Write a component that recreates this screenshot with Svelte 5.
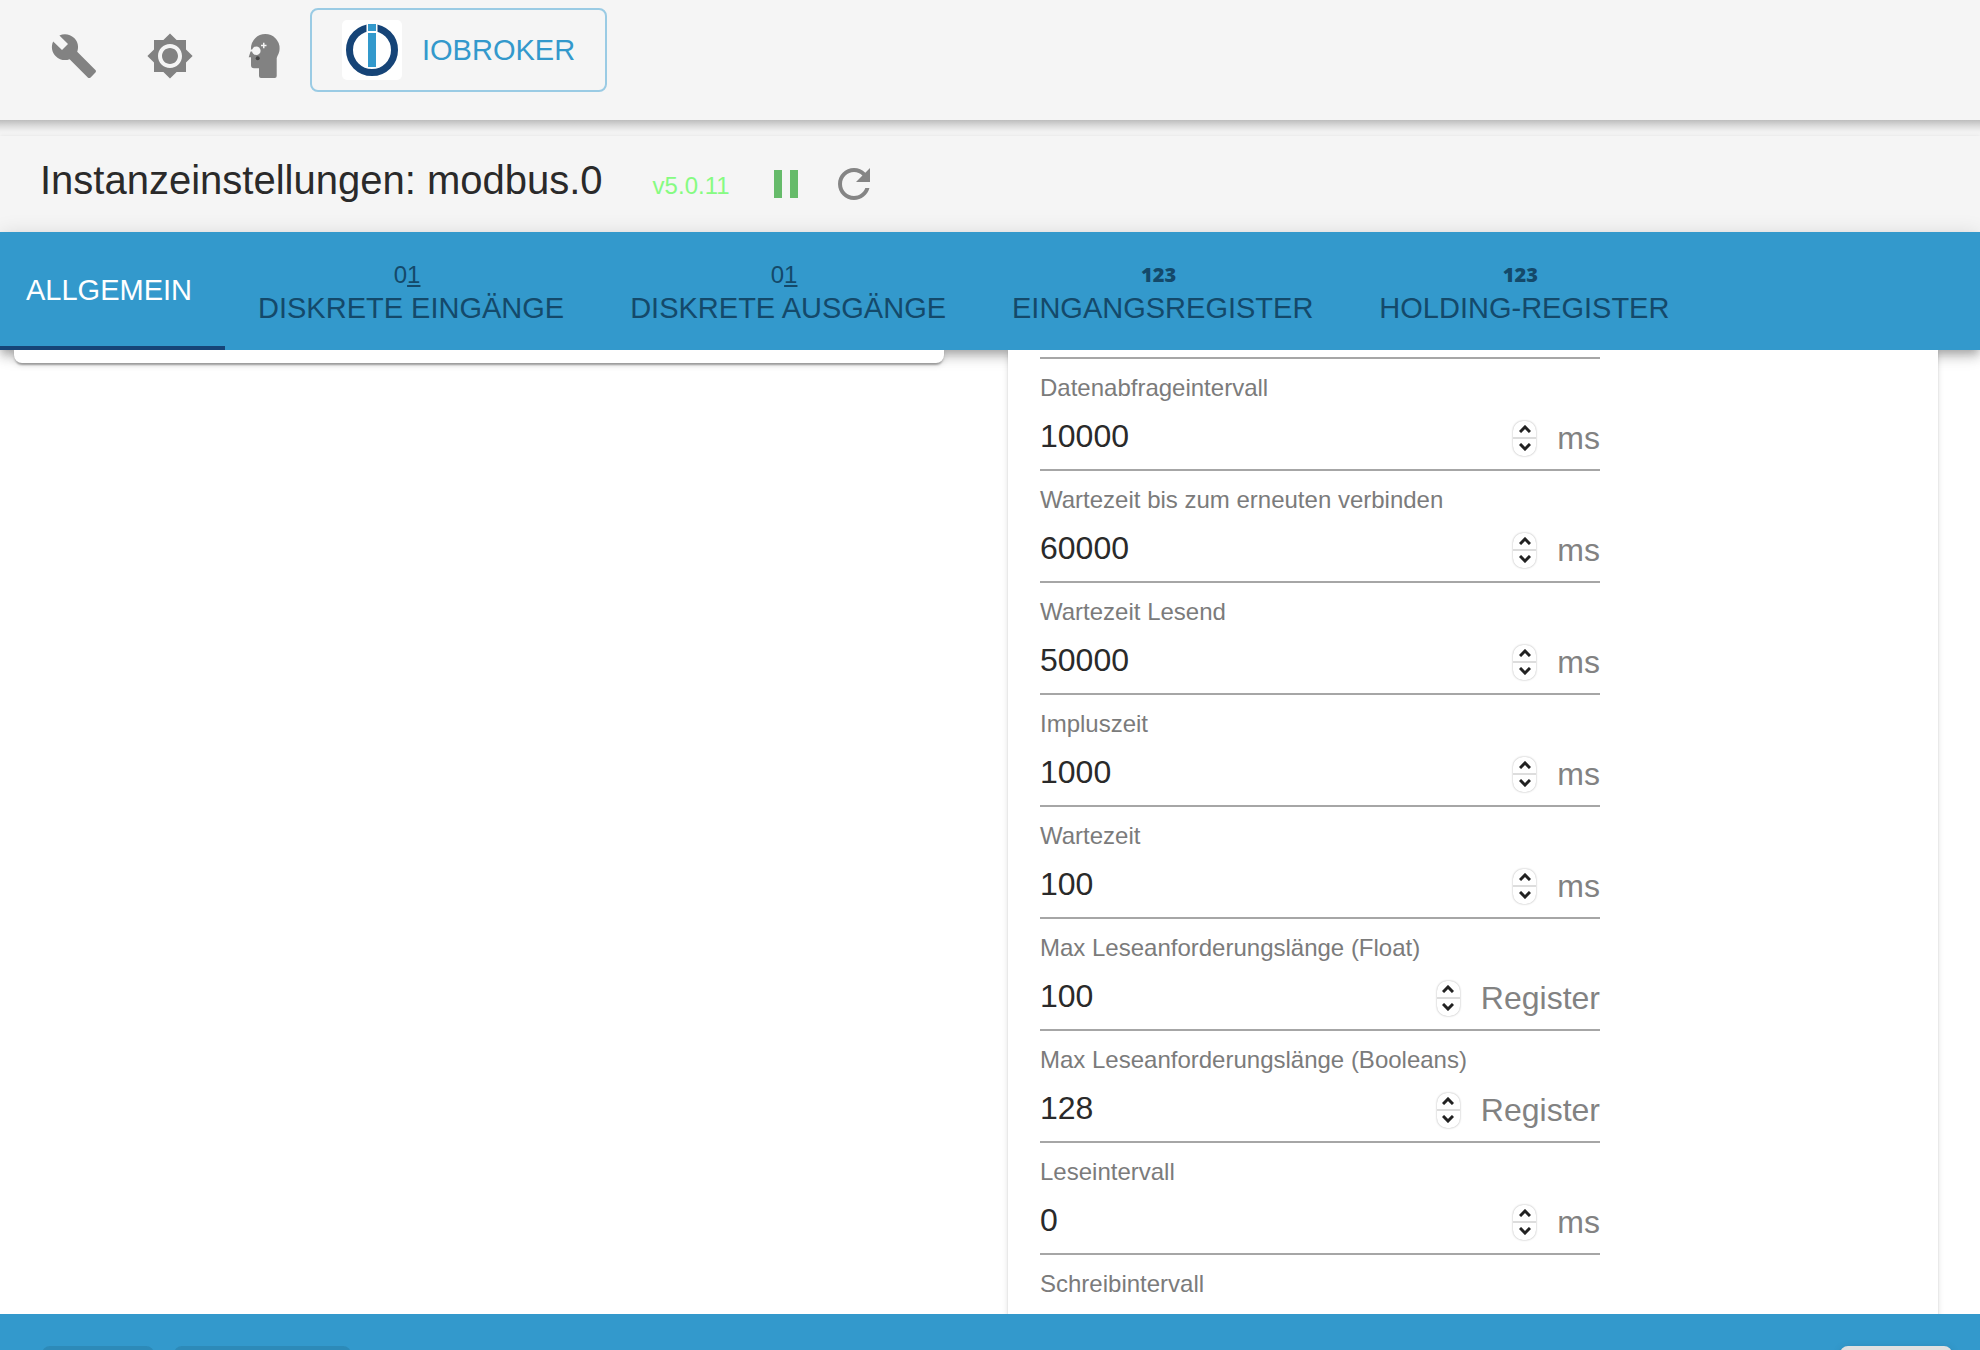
<script>
  let tabs = $state([
    { label: 'Allgemein', icon: '' },
    { label: 'Diskrete Eingänge', icon: 'binary' },
    { label: 'Diskrete Ausgänge', icon: 'binary' },
    { label: 'Eingangsregister', icon: 'number' },
    { label: 'Holding-Register', icon: 'number' },
  ]);
  let activeTab = $state(0);

  let fields = $state([
    { id: 'poll', label: 'Datenabfrageintervall', value: 10000, unit: 'ms' },
    { id: 'recon', label: 'Wartezeit bis zum erneuten verbinden', value: 60000, unit: 'ms' },
    { id: 'timeout', label: 'Wartezeit Lesend', value: 50000, unit: 'ms' },
    { id: 'pulsetime', label: 'Impluszeit', value: 1000, unit: 'ms' },
    { id: 'waitTime', label: 'Wartezeit', value: 100, unit: 'ms' },
    { id: 'maxBlock', label: 'Max Leseanforderungslänge (Float)', value: 100, unit: 'Register' },
    { id: 'maxBoolBlock', label: 'Max Leseanforderungslänge (Booleans)', value: 128, unit: 'Register' },
    { id: 'readInterval', label: 'Leseintervall', value: 0, unit: 'ms' },
    { id: 'writeInterval', label: 'Schreibintervall', value: null, unit: '' },
  ]);

  function step(field, delta) {
    field.value = Math.max(0, Number(field.value) + delta);
  }
</script>

<div class="app">
  <header class="topbar">
    <div class="tools">
      <button class="icon-button" aria-label="Einstellungen">
        <svg viewBox="0 0 24 24"><path d="M22.7 19l-9.1-9.1c.9-2.3.4-5-1.5-6.9-2-2-5-2.4-7.4-1.3L9 6 6 9 1.6 4.7C.4 7.1.9 10.1 2.9 12.1c1.9 1.9 4.6 2.4 6.9 1.5l9.1 9.1c.4.4 1 .4 1.4 0l2.3-2.3c.5-.4.5-1.1.1-1.4z" /></svg>
      </button>
      <button class="icon-button" aria-label="Farbschema">
        <svg viewBox="0 0 24 24"><path d="M20 8.69V4h-4.69L12 .69 8.69 4H4v4.69L.69 12 4 15.31V20h4.69L12 23.31 15.31 20H20v-4.69L23.31 12 20 8.69zM12 18c-3.31 0-6-2.69-6-6s2.69-6 6-6 6 2.69 6 6-2.69 6-6 6zm0-10c-2.21 0-4 1.79-4 4s1.79 4 4 4 4-1.79 4-4-1.79-4-4-4z" /></svg>
      </button>
      <button class="icon-button" aria-label="Expertenmodus">
        <svg viewBox="0 0 48 48">
          <path d="M9 16.300a14.300 14.300 0 0 1 28.600 0c0 4.500-1.500 6.200-2.900 9.700v18a2 2 0 0 1-2 2H19a2 2 0 0 1-2-2v-7.700h-5a3 3 0 0 1-3-3v-8H6.700L8.700 19z" />
          <path class="cut" d="M7 17.500h5v2H7zM21 10.700h1.500v2h2v1.500h-2v2H21v-2h-2v-1.500h2z" />
          <circle class="cut" cx="14.300" cy="18.700" r="4.300" />
          <circle class="dot" cx="15.700" cy="26.300" r="2" />
        </svg>
      </button>
    </div>
    <button class="host">
      <svg class="logo" viewBox="0 0 60 60">
        <rect width="60" height="60" rx="5" fill="#fff" />
        <circle cx="30" cy="30" r="22.500" fill="none" stroke="#164477" stroke-width="7" />
        <rect x="24.500" y="2" width="11" height="12" fill="#fff" />
        <rect x="26" y="4" width="8" height="7" fill="#3399cc" />
        <rect x="26" y="13" width="8" height="34" fill="#3399cc" />
      </svg>
      <span>IOBROKER</span>
    </button>
  </header>

  <div class="titlebar">
    <div class="heading">
      <h1>Instanzeinstellungen: modbus.0</h1>
      <span class="version">v5.0.11</span>
    </div>
    <button class="small-button pause" aria-label="Instanz anhalten">
      <svg viewBox="0 0 24 24"><path d="M6 19h4V5H6v14zm8-14v14h4V5h-4z" /></svg>
    </button>
    <button class="small-button" aria-label="Instanz neu starten">
      <svg viewBox="0 0 24 24"><path d="M17.650 6.350C16.200 4.900 14.210 4 12 4c-4.420 0-7.990 3.580-7.990 8s3.570 8 7.990 8c3.730 0 6.840-2.550 7.730-6h-2.080c-.82 2.330-3.040 4-5.650 4-3.310 0-6-2.690-6-6s2.690-6 6-6c1.660 0 3.140.69 4.220 1.780L13 11h7V4l-2.350 2.350z" /></svg>
    </button>
  </div>

  <nav class="tabs">
    {#each tabs as tab, i}
      <button class="tab" class:active={activeTab === i} onclick={() => (activeTab = i)}>
        {#if tab.icon === 'binary'}
          <span class="binary">0<u>1</u></span>
        {:else if tab.icon === 'number'}
          <span class="number">123</span>
        {/if}
        <span class="tab-label">{tab.label}</span>
      </button>
    {/each}
  </nav>

  <main>
    <section class="card connection"></section>
    <section class="card general">
      <div class="rule"></div>
      {#each fields as field}
        <div class="field">
          <label for={field.id}>{field.label}</label>
          <div class="row">
            <input id={field.id} type="number" bind:value={field.value} />
            <div class="spinner">
              <button aria-label="Erhöhen" onclick={() => step(field, 1)}>
                <svg viewBox="0 0 12 8"><path d="M1 7l5-5 5 5" /></svg>
              </button>
              <button aria-label="Verringern" onclick={() => step(field, -1)}>
                <svg viewBox="0 0 12 8"><path d="M1 1l5 5 5-5" /></svg>
              </button>
            </div>
            {#if field.unit}
              <span class="unit">{field.unit}</span>
            {/if}
          </div>
        </div>
      {/each}
    </section>
  </main>

  <footer>
    <button class="save" aria-label="Speichern" disabled></button>
    <button class="save wide" aria-label="Speichern und schließen" disabled></button>
    <button class="close" aria-label="Schließen"></button>
  </footer>
</div>

<style>
  :global(body) {
    margin: 0;
    background: #fff;
    font-family: "Liberation Sans", Arial, sans-serif;
  }

  * {
    box-sizing: border-box;
  }

  button {
    border: none;
    padding: 0;
    background: none;
    font: inherit;
    cursor: pointer;
  }

  svg {
    display: block;
  }

  .app {
    display: flex;
    flex-direction: column;
    height: 100vh;
    overflow: hidden;
  }

  .topbar {
    display: flex;
    align-items: flex-start;
    flex: none;
    height: 136px;
    padding: 8px 30px;
    background: linear-gradient(#f5f5f5 120px, #bdbdbd 120px, #dcdcdc 126px, #f0f0f0 131px, #f5f5f5 134px);
  }

  .tools {
    display: flex;
    gap: 8px;
  }

  .icon-button {
    width: 88px;
    height: 96px;
    padding: 24px 20px;
    fill: #828282;
  }

  .icon-button svg {
    width: 48px;
    height: 48px;
  }

  .cut {
    fill: #f5f5f5;
  }

  .dot {
    fill: #444;
  }

  .host {
    display: flex;
    align-items: center;
    gap: 20px;
    height: 84px;
    padding: 0 30px;
    border: 2px solid #9acbe4;
    border-radius: 8px;
    color: #3399cc;
    font-size: 29px;
  }

  .logo {
    width: 60px;
    height: 60px;
  }

  .titlebar {
    display: flex;
    align-items: center;
    flex: none;
    height: 96px;
    padding: 0 40px;
    background: #f5f5f5;
    box-shadow: 0 0 4px rgba(0, 0, 0, 0.08);
  }

  .heading {
    display: flex;
    align-items: baseline;
    gap: 50px;
    margin: 0 32px 8px 0;
  }

  h1 {
    margin: 0;
    color: #2a2a2a;
    font-size: 40px;
    font-weight: 400;
  }

  .version {
    color: #86fb82;
    font-size: 24px;
  }

  .small-button {
    width: 48px;
    height: 48px;
    margin-right: 20px;
    fill: #858585;
  }

  .pause {
    fill: #66bb6a;
  }

  .tabs {
    display: flex;
    flex: none;
    height: 118px;
    background: #3399cc;
    box-shadow: 0 4px 8px -2px rgba(0, 0, 0, 0.2), 0 8px 10px rgba(0, 0, 0, 0.14), 0 2px 20px rgba(0, 0, 0, 0.12);
  }

  .tab {
    display: flex;
    flex-direction: column;
    align-items: center;
    justify-content: center;
    padding: 2px 33px 0;
    border-bottom: 4px solid transparent;
    color: #14496a;
    font-size: 29px;
    line-height: 34px;
  }

  .tab:first-child {
    padding-left: 26px;
  }

  .tab.active {
    border-color: #164477;
    color: #fff;
  }

  .tab-label {
    text-transform: uppercase;
    white-space: nowrap;
  }

  .binary,
  .number {
    margin: 4px 8px 0 0;
    font-size: 24px;
    line-height: 32px;
  }

  .binary u {
    text-underline-offset: 2px;
    text-decoration-thickness: 2px;
  }

  .number {
    font-family: "Open Sans", sans-serif;
    font-size: 20px;
    font-weight: 800;
  }

  main {
    position: relative;
    display: grid;
    grid-template-columns: 1fr 1fr;
    flex: 1;
    align-items: start;
    gap: 64px;
    min-height: 0;
    padding: 0 42px 0 14px;
    overflow: hidden;
  }

  .card {
    min-width: 0;
    border-radius: 0 0 8px 8px;
    background: #fff;
    box-shadow: 0 4px 2px -2px rgba(0, 0, 0, 0.2), 0 2px 2px rgba(0, 0, 0, 0.14), 0 2px 6px rgba(0, 0, 0, 0.12);
  }

  .connection {
    height: 13px;
  }

  .general {
    padding: 7px 32px 32px;
  }

  .rule {
    width: 560px;
    max-width: 100%;
    height: 2px;
    background: #a6a6a6;
  }

  .field {
    width: 560px;
    max-width: 100%;
    padding-top: 15px;
    border-bottom: 2px solid #a6a6a6;
  }

  label {
    display: block;
    color: #7b7b7b;
    font-size: 24px;
    line-height: 28px;
  }

  .row {
    display: flex;
    align-items: center;
    height: 67px;
    padding-top: 5px;
  }

  input {
    flex: 1;
    min-width: 0;
    height: 60px;
    padding: 0 0 4px;
    border: none;
    outline: none;
    background: none;
    color: #2a2a2a;
    font: inherit;
    font-size: 32px;
    appearance: textfield;
  }

  input::-webkit-inner-spin-button {
    display: none;
  }

  .spinner {
    display: flex;
    flex-direction: column;
    width: 23px;
    height: 35px;
    margin-right: 21px;
    border-radius: 10px;
    box-shadow: 0 0 2px rgba(0, 0, 0, 0.35);
  }

  .spinner button {
    display: flex;
    align-items: center;
    justify-content: center;
    flex: 1;
  }

  .spinner button + button {
    border-top: 2px solid #ddd;
  }

  .spinner svg {
    width: 12px;
    height: 8px;
    fill: none;
    stroke: #222;
    stroke-width: 3;
  }

  .unit {
    color: #828282;
    font-size: 32px;
  }

  footer {
    display: flex;
    flex: none;
    gap: 20px;
    height: 36px;
    padding: 32px 28px 0 42px;
    background: #3399cc;
    position: relative;
    overflow: hidden;
  }

  .save,
  .close {
    width: 112px;
    height: 72px;
    border-radius: 8px;
    background: #2d8ab8;
  }

  .wide {
    width: 177px;
  }

  .close {
    margin-left: auto;
    background: #e0e0e0;
    box-shadow: 0 2px 10px rgba(0, 0, 0, 0.12), 0 4px 4px rgba(0, 0, 0, 0.14);
  }
</style>
